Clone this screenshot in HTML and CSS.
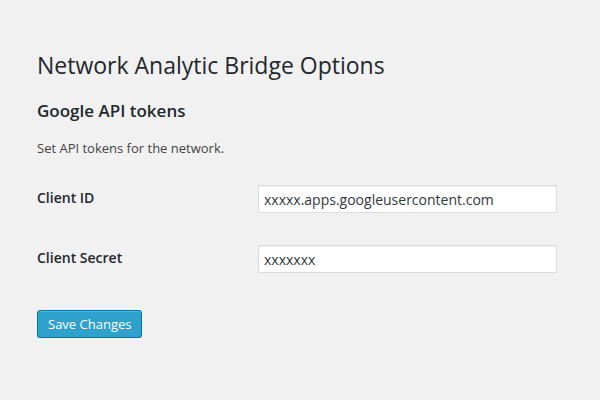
FILE: index.html
```html
<!DOCTYPE html>
<html>
<head>
<meta charset="utf-8">
<link rel="stylesheet" href="styles.css">
</head>
<body>
<div class="wrap">
  <h1 class="title">Network Analytic Bridge Options</h1>
  <h2 class="section">Google API tokens</h2>
  <p class="desc">Set API tokens for the network.</p>
  <div class="form">
    <div class="row">
      <label class="label">Client ID</label>
      <div class="field"><input class="input" type="text" value="xxxxx.apps.googleusercontent.com"></div>
    </div>
    <div class="row">
      <label class="label">Client Secret</label>
      <div class="field"><input class="input" type="text" value="xxxxxxx"></div>
    </div>
  </div>
  <div class="actions"><button class="button">Save Changes</button></div>
</div>
</body>
</html>
```
FILE: styles.css
```css
html, body {
  margin: 0;
  padding: 0;
  background: #f1f1f1;
  color: #444;
  font-family: "Open Sans", sans-serif;
}
.wrap {
  padding: 51px 0 0 37px;
  width: 520px;
}
.title {
  margin: 0;
  font-size: 23px;
  font-weight: 400;
  line-height: 29px;
  color: #23282d;
}
.section {
  margin: 20px 0 0;
  font-size: 17px;
  font-weight: 600;
  line-height: 22px;
  color: #23282d;
}
.desc {
  margin: 17px 0 0;
  font-size: 13px;
  line-height: 18px;
  color: #444;
}
.form {
  margin-top: 28px;
  display: flex;
  flex-direction: column;
  gap: 32px;
}
.row {
  display: grid;
  grid-template-columns: 221px 299px;
  align-items: start;
}
.label {
  font-size: 14px;
  font-weight: 600;
  line-height: 20px;
  color: #23282d;
  padding-top: 3px;
}
.input {
  box-sizing: border-box;
  width: 299px;
  height: 28px;
  margin: 0;
  padding: 3px 5px;
  border: 1px solid #ddd;
  background: #fff;
  box-shadow: inset 0 1px 2px rgba(0,0,0,0.07);
  font-family: "Open Sans", sans-serif;
  font-size: 14px;
  color: #32373c;
  outline: none;
}
.actions {
  margin-top: 37px;
}
.button {
  box-sizing: border-box;
  height: 28px;
  padding: 0 10px 1px;
  border: 1px solid #0074a2;
  border-radius: 3px;
  background: #2ea2cc;
  box-shadow: inset 0 1px 0 rgba(120,200,230,0.5), 0 1px 0 rgba(0,0,0,0.15);
  color: #fff;
  font-family: "Open Sans", sans-serif;
  font-size: 13px;
  line-height: 26px;
}
```
